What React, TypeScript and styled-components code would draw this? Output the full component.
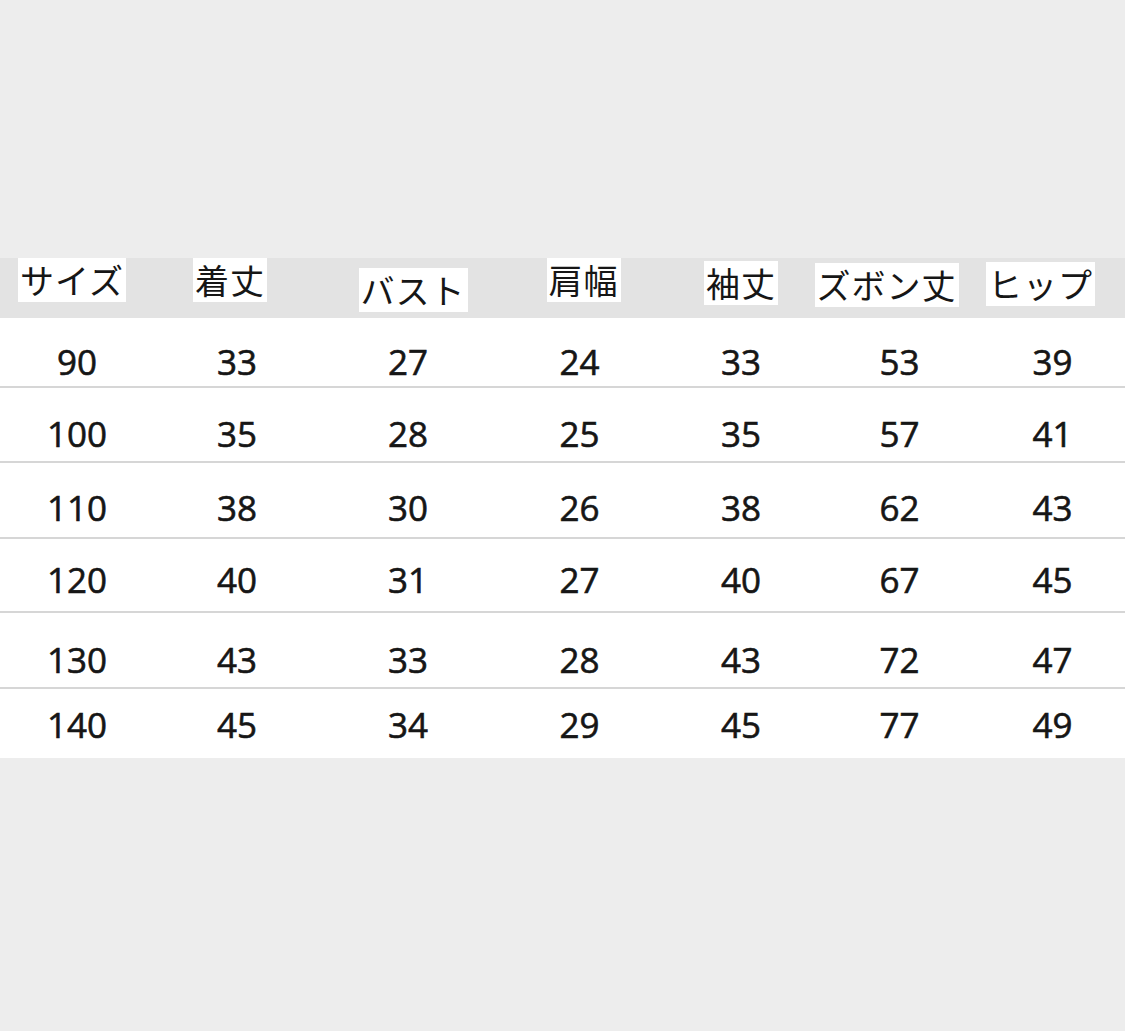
import styled, { createGlobalStyle } from "styled-components";

const GlobalStyle = createGlobalStyle`
  html, body {
    margin: 0;
    padding: 0;
    background: #ededed;
  }
  body {
    font-family: "Noto Sans CJK JP", "Noto Sans", sans-serif;
    color: #1c1c1c;
  }
`;

const Page = styled.div`
  width: 1125px;
  height: 1031px;
  padding-top: 258px;
  box-sizing: border-box;
`;

const cols = "154px 166px 176px 167px 156px 161px 145px";

const HeaderBand = styled.div`
  display: grid;
  grid-template-columns: ${cols};
  height: 60px;
  background: #e3e3e3;
  align-items: start;
`;

const HeaderCell = styled.div<{ $top: number; $shift?: number }>`
  display: flex;
  justify-content: center;
  padding-top: ${(p) => p.$top}px;
  transform: translateX(${(p) => p.$shift ?? 0}px);
`;

const HeaderLabel = styled.span`
  background: #ffffff;
  font-size: 34px;
  line-height: 44px;
  padding: 0 2px;
  letter-spacing: 1px;
  white-space: nowrap;
  color: #161616;
`;

const Body = styled.div`
  background: #ffffff;
`;

const Row = styled.div<{ $height: number; $pad: number; $last?: boolean }>`
  display: grid;
  grid-template-columns: ${cols};
  height: ${(p) => p.$height}px;
  padding-top: ${(p) => p.$pad}px;
  box-sizing: border-box;
  align-items: center;
  border-bottom: ${(p) => (p.$last ? "none" : "2px solid #d6d6d6")};
`;

const Cell = styled.div`
  text-align: center;
  font-family: "Open Sans", "Noto Sans", sans-serif;
  font-size: 35px;
  font-weight: 400;
  line-height: 40px;
  color: #161616;
  -webkit-text-stroke: 0.6px #161616;
`;

const headers = [
  { label: "サイズ", top: 0, shift: -5 },
  { label: "着丈", top: 0, shift: -7 },
  { label: "バスト", top: 10, shift: 5 },
  { label: "肩幅", top: 0, shift: 4 },
  { label: "袖丈", top: 3, shift: 0 },
  { label: "ズボン丈", top: 5, shift: -13 },
  { label: "ヒップ", top: 4, shift: -12 },
];

const rows = [
  { h: 70, pad: 20, values: ["90", "33", "27", "24", "33", "53", "39"] },
  { h: 75, pad: 18, values: ["100", "35", "28", "25", "35", "57", "41"] },
  { h: 76, pad: 16, values: ["110", "38", "30", "26", "38", "62", "43"] },
  { h: 74, pad: 10, values: ["120", "40", "31", "27", "40", "67", "45"] },
  { h: 76, pad: 20, values: ["130", "43", "33", "28", "43", "72", "47"] },
  { h: 69, pad: 2, values: ["140", "45", "34", "29", "45", "77", "49"] },
];

const App = () => {
  return (
    <Page>
      <GlobalStyle />
      <HeaderBand>
        {headers.map((h) => (
          <HeaderCell key={h.label} $top={h.top} $shift={h.shift}>
            <HeaderLabel>{h.label}</HeaderLabel>
          </HeaderCell>
        ))}
      </HeaderBand>
      <Body>
        {rows.map((r, i) => (
          <Row key={r.values[0]} $height={r.h} $pad={r.pad} $last={i === rows.length - 1}>
            {r.values.map((v, j) => (
              <Cell key={j}>{v}</Cell>
            ))}
          </Row>
        ))}
      </Body>
    </Page>
  );
};

export default App;
